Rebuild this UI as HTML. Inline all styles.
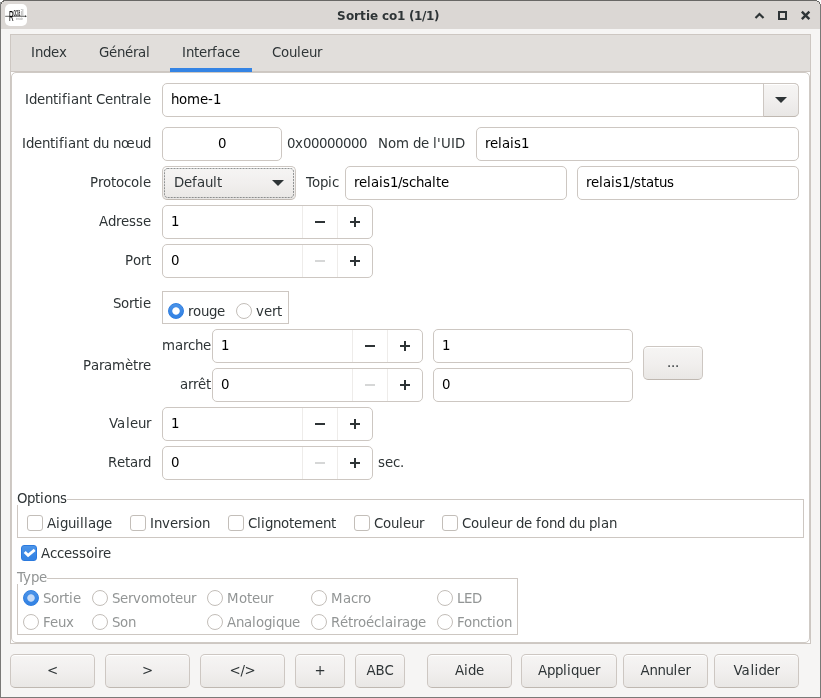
<!DOCTYPE html>
<html lang="fr"><head><meta charset="utf-8"><title>Sortie co1 (1/1)</title>
<style>
*{box-sizing:border-box;margin:0;padding:0}
html,body{width:821px;height:698px;overflow:hidden;background:#f6f5f4}
u{text-decoration:none}
body{font-kerning:none;font-variant-ligatures:none;font-family:"DejaVu Sans","Liberation Sans",sans-serif;font-size:13.3333px;color:#2e3436;position:relative}
#win{will-change:transform;position:absolute;left:0;top:0;width:821px;height:698px;background:#f6f5f4;border:1px solid #7a7977;border-top-color:#686765}
#win>*, #nb>*, .spin>i, .spin>b{position:absolute}
#title{left:0;top:0;width:819px;height:28px;background:#dbd7d4}
#title .t{position:absolute;left:336px;top:8px;font-weight:bold;font-size:12px;white-space:nowrap;color:#2e3436}
#nb{left:9px;top:33px;width:801px;height:610px;border:1px solid #cdc7c2;background:#fff}
#hdr{left:0;top:0;width:799px;height:37px;background:#e1dedb;border-bottom:1px solid #cdc7c2}
.tab{position:absolute;top:0;height:37px;line-height:36px;text-align:center;white-space:nowrap}
.tab.on{box-shadow:inset 0 -4px #3584e4}
#page{left:0;top:37px;width:799px;height:571px;border:1px solid #cfcac5;border-radius:5px}
.lbl{white-space:nowrap;height:17px;line-height:17px}
.r{text-align:right}
.ent{color:#000;height:34px;border:1px solid #cdc7c2;border-radius:5px;background:#fff;line-height:32px;padding-left:8px;white-space:nowrap}
.btn{height:34px;border:1px solid #cdc7c2;border-bottom-color:#bfb8b1;border-radius:5px;background:linear-gradient(#f6f5f4,#f1efee 50%,#e9e7e5);text-align:center;line-height:32px;box-shadow:inset 0 1px #fff;white-space:nowrap}
.spin{color:#000;height:34px;width:211px;border:1px solid #cdc7c2;border-radius:5px;background:#fff;line-height:32px;padding-left:8px}
.spin i{top:0;width:1px;height:32px;background:#eeecea}
.spin b{top:15px;height:2px;width:10px;background:#2e3436}
.spin b.v{top:11px;width:2px;height:10px}
.spin b.off{background:#d6d7d7}
.rad{width:16px;height:16px;border:1px solid #c3beb9;border-radius:50%;background:#fff}
.rad.on{border-color:#2f7ee0;background:radial-gradient(circle at 50% 50%,#fff 0,#fff 3.3px,rgba(255,255,255,0) 4.1px),linear-gradient(#4b93e8,#3584e4 80%)}
.rad.don{border-color:#2f7ee0;background:radial-gradient(circle at 50% 50%,#c4daf7 0,#c4daf7 3.3px,rgba(196,218,247,0) 4.1px),linear-gradient(#4b93e8,#3584e4 80%)}
.chk{width:16px;height:16px;border:1px solid #c3beb9;border-radius:3px;background:#fff}
.chk.on{border-color:#2b7ade;background:linear-gradient(#4d95e9,#3584e4 80%)}
.dis{color:#929595}
.frame{border:1px solid #cdc7c2}
.legend{background:#fff;white-space:nowrap;height:15px;line-height:17px}
</style></head><body>
<div id="win">
<div id="title"><div class="t"><u style="letter-spacing:0.36px">S</u><u style="letter-spacing:-0.24px">o</u><u style="letter-spacing:0.08px">r</u><u style="letter-spacing:0.26px">t</u><u style="letter-spacing:-0.11px">i</u><u style="letter-spacing:-0.14px">e</u><u style="letter-spacing:-0.18px"> </u><u style="letter-spacing:-0.11px">c</u><u style="letter-spacing:-0.24px">o</u><u style="letter-spacing:-0.35px">1</u><u style="letter-spacing:-0.18px"> </u><u style="letter-spacing:-0.48px">(</u><u style="letter-spacing:-0.35px">1</u><u style="letter-spacing:-0.38px">/</u><u style="letter-spacing:-0.35px">1</u><u style="letter-spacing:-0.48px">)</u></div>
<svg style="position:absolute;left:4px;top:3px" width="22" height="22" viewBox="0 0 22 22"><rect width="22" height="22" rx="5" fill="#fff"/><path d="M0.2 12.3H21" stroke="#222" stroke-width="0.7"/><path d="M20.2 11.3l1.6 1-1.6 1z" fill="#222"/><text x="3.9" y="17" font-family="Liberation Sans,sans-serif" font-size="14.6" fill="#000" stroke="#000" stroke-width=".1" textLength="4.6" lengthAdjust="spacingAndGlyphs">R</text><text x="8.4" y="11.8" font-family="Liberation Sans,sans-serif" font-size="10" fill="#000" stroke="#000" stroke-width=".15" textLength="6.8" lengthAdjust="spacingAndGlyphs">ocra</text><text x="15.4" y="11.8" font-family="Liberation Sans,sans-serif" font-size="9.6" font-weight="bold" fill="#b5b5b5" textLength="3.4" lengthAdjust="spacingAndGlyphs">il</text><text x="11" y="15.8" font-family="Liberation Sans,sans-serif" font-size="2.6" fill="#999" textLength="7" lengthAdjust="spacingAndGlyphs">inside</text></svg>
<svg style="position:absolute;left:753px;top:7px" width="60" height="14" viewBox="0 0 60 14"><path d="M1.5 10L5.5 6L9.5 10" fill="none" stroke="#2e3436" stroke-width="2.2"/><rect x="25" y="4" width="7" height="7" fill="none" stroke="#2e3436" stroke-width="2"/><path d="M47.85 3.7L55.35 11.2M55.35 3.7L47.85 11.2" stroke="#2e3436" stroke-width="2.4"/></svg>
</div>
<svg style="position:absolute;left:-1px;top:-1px" width="4" height="4" viewBox="0 0 4 4" shape-rendering="crispEdges"><rect width="4" height="4" fill="#dbd7d4"/><rect width="3" height="1" fill="#fdfdfd"/><rect x="3" width="1" height="1" fill="#6b6a68"/><rect y="1" width="2" height="1" fill="#fdfdfd"/><rect x="2" y="1" width="2" height="1" fill="#6b6a68"/><rect y="2" width="1" height="2" fill="#929494"/><rect x="1" y="2" width="1" height="2" fill="#6b6a68"/></svg>
<svg style="position:absolute;left:816px;top:-1px" width="4" height="4" viewBox="0 0 4 4" shape-rendering="crispEdges"><rect width="4" height="4" fill="#dbd7d4"/><rect width="4" height="1" fill="#fdfdfd"/><rect y="1" width="2" height="1" fill="#6b6a68"/><rect x="2" y="1" width="2" height="1" fill="#fdfdfd"/><rect x="2" y="2" width="1" height="2" fill="#6b6a68"/><rect x="3" y="2" width="1" height="2" fill="#fdfdfd"/></svg>
<div id="nb">
<div id="hdr">
<div class="tab" style="left:8px;width:60px"><u style="letter-spacing:0.07px">I</u><u style="letter-spacing:-0.45px">n</u><u style="letter-spacing:-0.46px">d</u><u style="letter-spacing:-0.2px">e</u><u style="letter-spacing:0.11px">x</u></div>
<div class="tab" style="left:76px;width:75px"><u style="letter-spacing:-0.33px">G</u><u style="letter-spacing:-0.2px">é</u><u style="letter-spacing:-0.45px">n</u><u style="letter-spacing:-0.2px">é</u><u style="letter-spacing:-0.48px">r</u><u style="letter-spacing:-0.17px">a</u><u style="letter-spacing:0.3px">l</u></div>
<div class="tab on" style="left:159px;width:82px"><u style="letter-spacing:0.07px">I</u><u style="letter-spacing:-0.45px">n</u><u style="letter-spacing:-0.23px">t</u><u style="letter-spacing:-0.2px">e</u><u style="letter-spacing:-0.48px">r</u><u style="letter-spacing:0.31px">f</u><u style="letter-spacing:-0.17px">a</u><u style="letter-spacing:-0.33px">c</u><u style="letter-spacing:-0.2px">e</u></div>
<div class="tab" style="left:249px;width:74px"><u style="letter-spacing:-0.31px">C</u><u style="letter-spacing:-0.16px">o</u><u style="letter-spacing:-0.45px">u</u><u style="letter-spacing:0.3px">l</u><u style="letter-spacing:-0.2px">e</u><u style="letter-spacing:-0.45px">u</u><u style="letter-spacing:-0.48px">r</u></div>
</div>
<div id="page"></div>
<div class="lbl r " style="right:659px;top:56px"><u style="letter-spacing:0.07px">I</u><u style="letter-spacing:-0.46px">d</u><u style="letter-spacing:-0.2px">e</u><u style="letter-spacing:-0.45px">n</u><u style="letter-spacing:-0.23px">t</u><u style="letter-spacing:0.3px">i</u><u style="letter-spacing:0.31px">f</u><u style="letter-spacing:0.3px">i</u><u style="letter-spacing:-0.17px">a</u><u style="letter-spacing:-0.45px">n</u><u style="letter-spacing:-0.23px">t</u><u style="letter-spacing:-0.24px"> </u><u style="letter-spacing:-0.31px">C</u><u style="letter-spacing:-0.2px">e</u><u style="letter-spacing:-0.45px">n</u><u style="letter-spacing:-0.23px">t</u><u style="letter-spacing:-0.48px">r</u><u style="letter-spacing:-0.17px">a</u><u style="letter-spacing:0.3px">l</u><u style="letter-spacing:-0.2px">e</u></div>
<div class="ent" style="left:151px;top:48px;width:637px;"><u style="letter-spacing:-0.45px">h</u><u style="letter-spacing:-0.16px">o</u>m<u style="letter-spacing:-0.2px">e</u><u style="letter-spacing:0.19px">-</u><u style="letter-spacing:-0.48px">1</u></div>
<div class="btn" style="left:752px;top:48px;width:36px;border-radius:0 5px 5px 0"><svg style="position:absolute;left:11px;top:13px" width="12" height="6" viewBox="0 0 12 6"><path d="M0 0h12l-6 6z" fill="#2e3436"/></svg></div>
<div class="lbl r " style="right:659px;top:100px"><u style="letter-spacing:0.07px">I</u><u style="letter-spacing:-0.46px">d</u><u style="letter-spacing:-0.2px">e</u><u style="letter-spacing:-0.45px">n</u><u style="letter-spacing:-0.23px">t</u><u style="letter-spacing:0.3px">i</u><u style="letter-spacing:0.31px">f</u><u style="letter-spacing:0.3px">i</u><u style="letter-spacing:-0.17px">a</u><u style="letter-spacing:-0.45px">n</u><u style="letter-spacing:-0.23px">t</u><u style="letter-spacing:-0.24px"> </u><u style="letter-spacing:-0.46px">d</u><u style="letter-spacing:-0.45px">u</u><u style="letter-spacing:-0.24px"> </u><u style="letter-spacing:-0.45px">n</u><u style="letter-spacing:0.36px">œ</u><u style="letter-spacing:-0.45px">u</u><u style="letter-spacing:-0.46px">d</u></div>
<div class="ent" style="left:151px;top:92px;width:120px;text-align:center;padding-left:0"><u style="letter-spacing:-0.48px">0</u></div>
<div class="lbl " style="left:276px;top:100px;"><u style="letter-spacing:-0.48px">0</u><u style="letter-spacing:0.11px">x</u><u style="letter-spacing:-0.48px">00000000</u></div>
<div class="lbl " style="left:367px;top:100px;"><u style="letter-spacing:0.03px">N</u><u style="letter-spacing:-0.16px">o</u>m<u style="letter-spacing:-0.24px"> </u><u style="letter-spacing:-0.46px">d</u><u style="letter-spacing:-0.2px">e</u><u style="letter-spacing:-0.24px"> </u><u style="letter-spacing:0.3px">l</u><u style="letter-spacing:0.33px">'</u><u style="letter-spacing:0.24px">U</u><u style="letter-spacing:0.07px">I</u><u style="letter-spacing:-0.27px">D</u></div>
<div class="ent" style="left:465px;top:92px;width:323px;"><u style="letter-spacing:-0.48px">r</u><u style="letter-spacing:-0.2px">e</u><u style="letter-spacing:0.3px">l</u><u style="letter-spacing:-0.17px">a</u><u style="letter-spacing:0.3px">i</u><u style="letter-spacing:0.05px">s</u><u style="letter-spacing:-0.48px">1</u></div>
<div class="lbl r " style="right:659px;top:139px"><u style="letter-spacing:-0.04px">P</u><u style="letter-spacing:-0.48px">r</u><u style="letter-spacing:-0.16px">o</u><u style="letter-spacing:-0.23px">t</u><u style="letter-spacing:-0.16px">o</u><u style="letter-spacing:-0.33px">c</u><u style="letter-spacing:-0.16px">o</u><u style="letter-spacing:0.3px">l</u><u style="letter-spacing:-0.2px">e</u></div>
<div class="btn" style="left:151px;top:131px;width:134px;text-align:left;padding-left:11px"><u style="letter-spacing:-0.27px">D</u><u style="letter-spacing:-0.2px">e</u><u style="letter-spacing:0.31px">f</u><u style="letter-spacing:-0.17px">a</u><u style="letter-spacing:-0.45px">u</u><u style="letter-spacing:0.3px">l</u><u style="letter-spacing:-0.23px">t</u><svg style="position:absolute;left:109px;top:13px" width="12" height="6" viewBox="0 0 12 6"><path d="M0 0h12l-6 6z" fill="#2e3436"/></svg><svg style="position:absolute;left:1px;top:1px" width="130" height="30" viewBox="0 0 130 30"><rect x=".5" y=".5" width="129" height="29" rx="3" fill="none" stroke="#2e3436" stroke-opacity=".5" stroke-dasharray="2 1"/></svg></div>
<div class="lbl " style="left:295px;top:139px;"><u style="letter-spacing:-2.14px">T</u><u style="letter-spacing:-0.16px">o</u><u style="letter-spacing:-0.46px">p</u><u style="letter-spacing:0.3px">i</u><u style="letter-spacing:-0.33px">c</u></div>
<div class="ent" style="left:334px;top:131px;width:222px;"><u style="letter-spacing:-0.48px">r</u><u style="letter-spacing:-0.2px">e</u><u style="letter-spacing:0.3px">l</u><u style="letter-spacing:-0.17px">a</u><u style="letter-spacing:0.3px">i</u><u style="letter-spacing:0.05px">s</u><u style="letter-spacing:-0.48px">1</u><u style="letter-spacing:-0.49px">/</u><u style="letter-spacing:0.05px">s</u><u style="letter-spacing:-0.33px">c</u><u style="letter-spacing:-0.45px">h</u><u style="letter-spacing:-0.17px">a</u><u style="letter-spacing:0.3px">l</u><u style="letter-spacing:-0.23px">t</u><u style="letter-spacing:-0.2px">e</u></div>
<div class="ent" style="left:566px;top:131px;width:222px;"><u style="letter-spacing:-0.48px">r</u><u style="letter-spacing:-0.2px">e</u><u style="letter-spacing:0.3px">l</u><u style="letter-spacing:-0.17px">a</u><u style="letter-spacing:0.3px">i</u><u style="letter-spacing:0.05px">s</u><u style="letter-spacing:-0.48px">1</u><u style="letter-spacing:-0.49px">/</u><u style="letter-spacing:0.05px">s</u><u style="letter-spacing:-0.23px">t</u><u style="letter-spacing:-0.17px">a</u><u style="letter-spacing:-0.23px">t</u><u style="letter-spacing:-0.45px">u</u><u style="letter-spacing:0.05px">s</u></div>
<div class="lbl r " style="right:659px;top:178px"><u style="letter-spacing:-0.12px">A</u><u style="letter-spacing:-0.46px">d</u><u style="letter-spacing:-0.48px">r</u><u style="letter-spacing:-0.2px">e</u><u style="letter-spacing:0.05px">ss</u><u style="letter-spacing:-0.2px">e</u></div>
<div class="spin" style="left:151px;top:170px"><u style="letter-spacing:-0.48px">1</u><i style="left:139px"></i><i style="left:174px"></i><b class="" style="left:152px"></b><b style="left:187px"></b><b class="v" style="left:191px"></b></div>
<div class="lbl r " style="right:659px;top:217px"><u style="letter-spacing:-0.04px">P</u><u style="letter-spacing:-0.16px">o</u><u style="letter-spacing:-0.48px">r</u><u style="letter-spacing:-0.23px">t</u></div>
<div class="spin" style="left:151px;top:209px"><u style="letter-spacing:-0.48px">0</u><i style="left:139px"></i><i style="left:174px"></i><b class="off" style="left:152px"></b><b style="left:187px"></b><b class="v" style="left:191px"></b></div>
<div class="lbl r " style="right:659px;top:260px"><u style="letter-spacing:-0.46px">S</u><u style="letter-spacing:-0.16px">o</u><u style="letter-spacing:-0.48px">r</u><u style="letter-spacing:-0.23px">t</u><u style="letter-spacing:0.3px">i</u><u style="letter-spacing:-0.2px">e</u></div>
<div class="frame" style="left:151px;top:256px;width:127px;height:33px"></div>
<div class="rad on" style="left:157px;top:268px"></div>
<div class="lbl " style="left:177px;top:268px;"><u style="letter-spacing:-0.48px">r</u><u style="letter-spacing:-0.16px">o</u><u style="letter-spacing:-0.45px">u</u><u style="letter-spacing:-0.46px">g</u><u style="letter-spacing:-0.2px">e</u></div>
<div class="rad " style="left:225px;top:268px"></div>
<div class="lbl " style="left:245px;top:268px;"><u style="letter-spacing:0.11px">v</u><u style="letter-spacing:-0.2px">e</u><u style="letter-spacing:-0.48px">r</u><u style="letter-spacing:-0.23px">t</u></div>
<div class="lbl r " style="right:659px;top:322px"><u style="letter-spacing:-0.04px">P</u><u style="letter-spacing:-0.17px">a</u><u style="letter-spacing:-0.48px">r</u><u style="letter-spacing:-0.17px">a</u>m<u style="letter-spacing:-0.2px">è</u><u style="letter-spacing:-0.23px">t</u><u style="letter-spacing:-0.48px">r</u><u style="letter-spacing:-0.2px">e</u></div>
<div class="lbl " style="left:151px;top:302px;">m<u style="letter-spacing:-0.17px">a</u><u style="letter-spacing:-0.48px">r</u><u style="letter-spacing:-0.33px">c</u><u style="letter-spacing:-0.45px">h</u><u style="letter-spacing:-0.2px">e</u></div>
<div class="spin" style="left:201px;top:294px"><u style="letter-spacing:-0.48px">1</u><i style="left:139px"></i><i style="left:174px"></i><b class="" style="left:152px"></b><b style="left:187px"></b><b class="v" style="left:191px"></b></div>
<div class="ent" style="left:422px;top:294px;width:200px;"><u style="letter-spacing:-0.48px">1</u></div>
<div class="lbl " style="left:169px;top:341px;"><u style="letter-spacing:-0.17px">a</u><u style="letter-spacing:-0.48px">rr</u><u style="letter-spacing:-0.2px">ê</u><u style="letter-spacing:-0.23px">t</u></div>
<div class="spin" style="left:201px;top:333px"><u style="letter-spacing:-0.48px">0</u><i style="left:139px"></i><i style="left:174px"></i><b class="off" style="left:152px"></b><b style="left:187px"></b><b class="v" style="left:191px"></b></div>
<div class="ent" style="left:422px;top:333px;width:200px;"><u style="letter-spacing:-0.48px">0</u></div>
<div class="btn" style="left:632px;top:311px;width:60px;"><u style="letter-spacing:-0.24px">...</u></div>
<div class="lbl r " style="right:659px;top:380px"><u style="letter-spacing:-1.12px">V</u><u style="letter-spacing:0.83px">a</u><u style="letter-spacing:0.3px">l</u><u style="letter-spacing:-0.2px">e</u><u style="letter-spacing:-0.45px">u</u><u style="letter-spacing:-0.48px">r</u></div>
<div class="spin" style="left:151px;top:372px"><u style="letter-spacing:-0.48px">1</u><i style="left:139px"></i><i style="left:174px"></i><b class="" style="left:152px"></b><b style="left:187px"></b><b class="v" style="left:191px"></b></div>
<div class="lbl r " style="right:659px;top:419px"><u style="letter-spacing:-0.26px">R</u><u style="letter-spacing:-0.2px">e</u><u style="letter-spacing:-0.23px">t</u><u style="letter-spacing:-0.17px">a</u><u style="letter-spacing:-0.48px">r</u><u style="letter-spacing:-0.46px">d</u></div>
<div class="spin" style="left:151px;top:411px"><u style="letter-spacing:-0.48px">0</u><i style="left:139px"></i><i style="left:174px"></i><b class="off" style="left:152px"></b><b style="left:187px"></b><b class="v" style="left:191px"></b></div>
<div class="lbl " style="left:367px;top:419px;"><u style="letter-spacing:0.05px">s</u><u style="letter-spacing:-0.2px">e</u><u style="letter-spacing:-0.33px">c</u><u style="letter-spacing:-0.24px">.</u></div>
<div class="frame" style="left:6px;top:464px;width:787px;height:39px"></div>
<div class="legend" style="left:6px;top:455px;padding-right:0"><u style="letter-spacing:-0.49px">O</u><u style="letter-spacing:-0.46px">p</u><u style="letter-spacing:-0.23px">t</u><u style="letter-spacing:0.3px">i</u><u style="letter-spacing:-0.16px">o</u><u style="letter-spacing:-0.45px">n</u><u style="letter-spacing:0.05px">s</u></div>
<div class="chk " style="left:16px;top:480px"></div>
<div class="lbl " style="left:36px;top:480px;"><u style="letter-spacing:-0.12px">A</u><u style="letter-spacing:0.3px">i</u><u style="letter-spacing:-0.46px">g</u><u style="letter-spacing:-0.45px">u</u><u style="letter-spacing:0.3px">ill</u><u style="letter-spacing:-0.17px">a</u><u style="letter-spacing:-0.46px">g</u><u style="letter-spacing:-0.2px">e</u></div>
<div class="chk " style="left:119px;top:480px"></div>
<div class="lbl " style="left:139px;top:480px;"><u style="letter-spacing:0.07px">I</u><u style="letter-spacing:-0.45px">n</u><u style="letter-spacing:0.11px">v</u><u style="letter-spacing:-0.2px">e</u><u style="letter-spacing:-0.48px">r</u><u style="letter-spacing:0.05px">s</u><u style="letter-spacing:0.3px">i</u><u style="letter-spacing:-0.16px">o</u><u style="letter-spacing:-0.45px">n</u></div>
<div class="chk " style="left:217px;top:480px"></div>
<div class="lbl " style="left:237px;top:480px;"><u style="letter-spacing:-0.31px">C</u><u style="letter-spacing:0.3px">li</u><u style="letter-spacing:-0.46px">g</u><u style="letter-spacing:-0.45px">n</u><u style="letter-spacing:-0.16px">o</u><u style="letter-spacing:-0.23px">t</u><u style="letter-spacing:-0.2px">e</u>m<u style="letter-spacing:-0.2px">e</u><u style="letter-spacing:-0.45px">n</u><u style="letter-spacing:-0.23px">t</u></div>
<div class="chk " style="left:343px;top:480px"></div>
<div class="lbl " style="left:363px;top:480px;"><u style="letter-spacing:-0.31px">C</u><u style="letter-spacing:-0.16px">o</u><u style="letter-spacing:-0.45px">u</u><u style="letter-spacing:0.3px">l</u><u style="letter-spacing:-0.2px">e</u><u style="letter-spacing:-0.45px">u</u><u style="letter-spacing:-0.48px">r</u></div>
<div class="chk " style="left:431px;top:480px"></div>
<div class="lbl " style="left:451px;top:480px;"><u style="letter-spacing:-0.31px">C</u><u style="letter-spacing:-0.16px">o</u><u style="letter-spacing:-0.45px">u</u><u style="letter-spacing:0.3px">l</u><u style="letter-spacing:-0.2px">e</u><u style="letter-spacing:-0.45px">u</u><u style="letter-spacing:-0.48px">r</u><u style="letter-spacing:-0.24px"> </u><u style="letter-spacing:-0.46px">d</u><u style="letter-spacing:-0.2px">e</u><u style="letter-spacing:-0.24px"> </u><u style="letter-spacing:0.31px">f</u><u style="letter-spacing:-0.16px">o</u><u style="letter-spacing:-0.45px">n</u><u style="letter-spacing:-0.46px">d</u><u style="letter-spacing:-0.24px"> </u><u style="letter-spacing:-0.46px">d</u><u style="letter-spacing:-0.45px">u</u><u style="letter-spacing:-0.24px"> </u><u style="letter-spacing:-0.46px">p</u><u style="letter-spacing:0.3px">l</u><u style="letter-spacing:-0.17px">a</u><u style="letter-spacing:-0.45px">n</u></div>
<div class="chk on" style="left:10px;top:510px"><svg width="14" height="14" viewBox="0 0 14 14" style="position:absolute;left:0;top:0"><path d="M2.7 6L6.1 9.3L12.7 3.8" fill="none" stroke="#fff" stroke-width="2.8"/></svg></div>
<div class="lbl " style="left:30px;top:510px;"><u style="letter-spacing:-0.12px">A</u><u style="letter-spacing:-0.33px">cc</u><u style="letter-spacing:-0.2px">e</u><u style="letter-spacing:0.05px">ss</u><u style="letter-spacing:-0.16px">o</u><u style="letter-spacing:0.3px">i</u><u style="letter-spacing:-0.48px">r</u><u style="letter-spacing:-0.2px">e</u></div>
<div class="frame" style="left:6px;top:543px;width:501px;height:57px"></div>
<div class="legend dis" style="left:6px;top:534px;padding-right:0"><u style="letter-spacing:-2.14px">T</u><u style="letter-spacing:0.11px">y</u><u style="letter-spacing:-0.46px">p</u><u style="letter-spacing:-0.2px">e</u></div>
<div class="rad don" style="left:12px;top:555px"></div>
<div class="lbl dis" style="left:32px;top:555px;"><u style="letter-spacing:-0.46px">S</u><u style="letter-spacing:-0.16px">o</u><u style="letter-spacing:-0.48px">r</u><u style="letter-spacing:-0.23px">t</u><u style="letter-spacing:0.3px">i</u><u style="letter-spacing:-0.2px">e</u></div>
<div class="rad " style="left:81px;top:555px"></div>
<div class="lbl dis" style="left:101px;top:555px;"><u style="letter-spacing:-0.46px">S</u><u style="letter-spacing:-0.2px">e</u><u style="letter-spacing:-0.48px">r</u><u style="letter-spacing:0.11px">v</u><u style="letter-spacing:-0.16px">o</u>m<u style="letter-spacing:-0.16px">o</u><u style="letter-spacing:-0.23px">t</u><u style="letter-spacing:-0.2px">e</u><u style="letter-spacing:-0.45px">u</u><u style="letter-spacing:-0.48px">r</u></div>
<div class="rad " style="left:196px;top:555px"></div>
<div class="lbl dis" style="left:216px;top:555px;"><u style="letter-spacing:0.5px">M</u><u style="letter-spacing:-0.16px">o</u><u style="letter-spacing:-0.23px">t</u><u style="letter-spacing:-0.2px">e</u><u style="letter-spacing:-0.45px">u</u><u style="letter-spacing:-0.48px">r</u></div>
<div class="rad " style="left:300px;top:555px"></div>
<div class="lbl dis" style="left:320px;top:555px;"><u style="letter-spacing:0.5px">M</u><u style="letter-spacing:-0.17px">a</u><u style="letter-spacing:-0.33px">c</u><u style="letter-spacing:-0.48px">r</u><u style="letter-spacing:-0.16px">o</u></div>
<div class="rad " style="left:426px;top:555px"></div>
<div class="lbl dis" style="left:446px;top:555px;"><u style="letter-spacing:-0.43px">L</u><u style="letter-spacing:-0.42px">E</u><u style="letter-spacing:-0.27px">D</u></div>
<div class="rad " style="left:12px;top:579px"></div>
<div class="lbl dis" style="left:32px;top:579px;"><u style="letter-spacing:-0.67px">F</u><u style="letter-spacing:-0.2px">e</u><u style="letter-spacing:-0.45px">u</u><u style="letter-spacing:0.11px">x</u></div>
<div class="rad " style="left:81px;top:579px"></div>
<div class="lbl dis" style="left:101px;top:579px;"><u style="letter-spacing:-0.46px">S</u><u style="letter-spacing:-0.16px">o</u><u style="letter-spacing:-0.45px">n</u></div>
<div class="rad " style="left:196px;top:579px"></div>
<div class="lbl dis" style="left:216px;top:579px;"><u style="letter-spacing:-0.12px">A</u><u style="letter-spacing:-0.45px">n</u><u style="letter-spacing:-0.17px">a</u><u style="letter-spacing:0.3px">l</u><u style="letter-spacing:-0.16px">o</u><u style="letter-spacing:-0.46px">g</u><u style="letter-spacing:0.3px">i</u><u style="letter-spacing:-0.46px">q</u><u style="letter-spacing:-0.45px">u</u><u style="letter-spacing:-0.2px">e</u></div>
<div class="rad " style="left:300px;top:579px"></div>
<div class="lbl dis" style="left:320px;top:579px;"><u style="letter-spacing:-0.26px">R</u><u style="letter-spacing:-0.2px">é</u><u style="letter-spacing:-0.23px">t</u><u style="letter-spacing:-0.48px">r</u><u style="letter-spacing:-0.16px">o</u><u style="letter-spacing:-0.2px">é</u><u style="letter-spacing:-0.33px">c</u><u style="letter-spacing:0.3px">l</u><u style="letter-spacing:-0.17px">a</u><u style="letter-spacing:0.3px">i</u><u style="letter-spacing:-0.48px">r</u><u style="letter-spacing:-0.17px">a</u><u style="letter-spacing:-0.46px">g</u><u style="letter-spacing:-0.2px">e</u></div>
<div class="rad " style="left:426px;top:579px"></div>
<div class="lbl dis" style="left:446px;top:579px;"><u style="letter-spacing:-0.67px">F</u><u style="letter-spacing:-0.16px">o</u><u style="letter-spacing:-0.45px">n</u><u style="letter-spacing:-0.33px">c</u><u style="letter-spacing:-0.23px">t</u><u style="letter-spacing:0.3px">i</u><u style="letter-spacing:-0.16px">o</u><u style="letter-spacing:-0.45px">n</u></div>
</div>
<div class="btn" style="left:9px;top:653px;width:85px"><u style="letter-spacing:-0.17px">&lt;</u></div>
<div class="btn" style="left:104px;top:653px;width:85px"><u style="letter-spacing:-0.17px">&gt;</u></div>
<div class="btn" style="left:199px;top:653px;width:85px"><u style="letter-spacing:-0.17px">&lt;</u><u style="letter-spacing:-0.49px">/</u><u style="letter-spacing:-0.17px">&gt;</u></div>
<div class="btn" style="left:294px;top:653px;width:50px"><u style="letter-spacing:-0.17px">+</u></div>
<div class="btn" style="left:354px;top:653px;width:50px"><u style="letter-spacing:-0.12px">A</u><u style="letter-spacing:-0.15px">B</u><u style="letter-spacing:-0.31px">C</u></div>
<div class="btn" style="left:426px;top:653px;width:85px"><u style="letter-spacing:-0.12px">A</u><u style="letter-spacing:0.3px">i</u><u style="letter-spacing:-0.46px">d</u><u style="letter-spacing:-0.2px">e</u></div>
<div class="btn" style="left:520px;top:653px;width:96px"><u style="letter-spacing:-0.12px">A</u><u style="letter-spacing:-0.46px">pp</u><u style="letter-spacing:0.3px">li</u><u style="letter-spacing:-0.46px">q</u><u style="letter-spacing:-0.45px">u</u><u style="letter-spacing:-0.2px">e</u><u style="letter-spacing:-0.48px">r</u></div>
<div class="btn" style="left:622px;top:653px;width:85px"><u style="letter-spacing:-0.12px">A</u><u style="letter-spacing:-0.45px">nnu</u><u style="letter-spacing:0.3px">l</u><u style="letter-spacing:-0.2px">e</u><u style="letter-spacing:-0.48px">r</u></div>
<div class="btn" style="left:713px;top:653px;width:85px"><u style="letter-spacing:-1.12px">V</u><u style="letter-spacing:0.83px">a</u><u style="letter-spacing:0.3px">li</u><u style="letter-spacing:-0.46px">d</u><u style="letter-spacing:-0.2px">e</u><u style="letter-spacing:-0.48px">r</u></div>
</div></body></html>
